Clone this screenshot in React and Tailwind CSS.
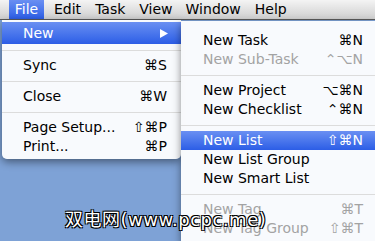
import React from 'react';

const font = { fontFamily: '"DejaVu Sans", "Noto Sans CJK SC", sans-serif' };

const fileItems = [
  { type: 'item', label: 'New', sub: true, active: true, tall: true },
  { type: 'sep' },
  { type: 'item', label: 'Sync', key: '⌘S' },
  { type: 'sep' },
  { type: 'item', label: 'Close', key: '⌘W' },
  { type: 'sep' },
  { type: 'item', label: 'Page Setup...', key: '⇧⌘P' },
  { type: 'item', label: 'Print...', key: '⌘P' },
];

const newItems = [
  { type: 'item', label: 'New Task', key: '⌘N' },
  { type: 'item', label: 'New Sub-Task', key: '⌃⌥N', disabled: true },
  { type: 'sep' },
  { type: 'item', label: 'New Project', key: '⌥⌘N' },
  { type: 'item', label: 'New Checklist', key: '⌃⌘N' },
  { type: 'sep' },
  { type: 'item', label: 'New List', key: '⇧⌘N', active: true },
  { type: 'item', label: 'New List Group' },
  { type: 'item', label: 'New Smart List' },
  { type: 'sep' },
  { type: 'item', label: 'New Tag', key: '⌘T', disabled: true },
  { type: 'item', label: 'New Tag Group', key: '⇧⌘T', disabled: true },
];

function MenuRow({ item, padL, padR }) {
  if (item.type === 'sep') {
    return (
      <div className="h-[12px] flex items-center">
        <div className="h-px w-full bg-[#dcdcdc]" />
      </div>
    );
  }
  const color = item.active ? 'text-white' : item.disabled ? 'text-[#a3a3a3]' : 'text-black';
  return (
    <div
      className={`flex items-center justify-between ${item.tall ? 'h-[22px]' : 'h-[19px]'} ${padL} ${padR} ${color} ${item.active ? 'bg-gradient-to-b from-[#6a8ff2] to-[#2c5de6]' : ''}`}
    >
      <span>{item.label}</span>
      {item.sub ? (
        <svg width="8" height="9" viewBox="0 0 8 9" className="mr-[-1px]">
          <polygon points="0,0 8,4.5 0,9" fill="#fff" />
        </svg>
      ) : (
        <span>{item.key}</span>
      )}
    </div>
  );
}

export default function App() {
  return (
    <div className="relative h-[241px] w-[375px] overflow-hidden bg-[#7ea2d6] text-[14px]" style={font}>
      <div className="flex h-[20px] items-center border-b border-[#5a5a5a] bg-gradient-to-b from-[#f4f4f4] to-[#cfcfcf] text-[14px] text-black">
        <div className="ml-[9px] flex h-full w-[35px] items-center justify-center bg-gradient-to-b from-[#6a8ff2] to-[#2c5de6] text-white">File</div>
        <div className="ml-[10px]">Edit</div>
        <div className="ml-[14px]">Task</div>
        <div className="ml-[14px]">View</div>
        <div className="ml-[13px]">Window</div>
        <div className="ml-[14px]">Help</div>
      </div>

      <div className="flex items-start">
        <div className="ml-[2px] w-[179px] rounded-b-[5px] bg-white/95 pt-[2px] pb-[3px] shadow-[0_3px_8px_rgba(0,0,0,0.45)]">
          {fileItems.map((it, i) => (
            <MenuRow key={i} item={it} padL="pl-[21px]" padR="pr-[14px]" />
          ))}
        </div>
        <div className="mt-[1px] flex-1 bg-white/95 pt-[10px] pb-[4px] shadow-[0_3px_8px_rgba(0,0,0,0.45)]">
          {newItems.map((it, i) => (
            <MenuRow key={i} item={it} padL="pl-[22px]" padR="pr-[12px]" />
          ))}
        </div>
      </div>

      <div
        className="absolute left-[65px] top-[206px] text-[18px] tracking-[0.5px] text-white"
        style={{ textShadow: '1px 1px 0 #000, -1px -1px 0 #000, 1px -1px 0 #000, -1px 1px 0 #000' }}
      >
        双电网(www.pcpc.me)
      </div>
    </div>
  );
}
